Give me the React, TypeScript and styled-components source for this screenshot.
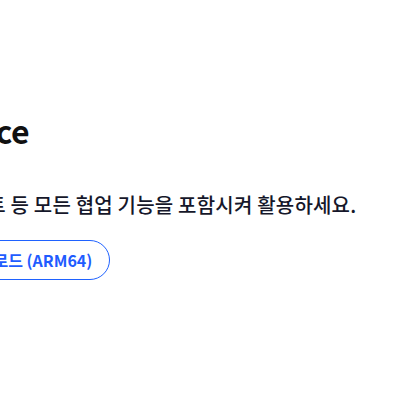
import React from "react";
import styled, { createGlobalStyle } from "styled-components";

const Global = createGlobalStyle`
  html, body { margin: 0; padding: 0; background: #ffffff; overflow: hidden; }
  body { font-family: "Noto Sans CJK KR", "Noto Sans", sans-serif; }
`;

const Page = styled.main`
  width: 400px;
  height: 400px;
  overflow: hidden;
  position: relative;
`;

const Column = styled.section`
  display: flex;
  flex-direction: column;
  align-items: flex-start;
  margin-left: -54px;
  padding-top: 108px;
  width: 560px;
`;

const Title = styled.h1`
  margin: 0;
  font-size: 32px;
  font-weight: 700;
  line-height: 44px;
  color: #111111;
  letter-spacing: -0.3px;
  white-space: nowrap;
`;

const Desc = styled.p`
  margin: 39px 0 0 4px;
  font-size: 20px;
  font-weight: 500;
  line-height: 28px;
  color: #15172a;
  letter-spacing: 0.2px;
  white-space: nowrap;
`;

const Button = styled.a`
  display: inline-flex;
  align-items: center;
  margin-top: 21px;
  height: 40px;
  box-sizing: border-box;
  padding: 0 17px;
  border: 1px solid #1f62ff;
  border-radius: 20px;
  color: #1f5cff;
  font-size: 16px;
  font-weight: 700;
  text-decoration: none;
  white-space: nowrap;
`;

export default function App() {
  return (
    <Page>
      <Global />
      <Column>
        <Title>Place</Title>
        <Desc>리포트 등 모든 협업 기능을 포함시켜 활용하세요.</Desc>
        <Button href="#">다운로드 (ARM64)</Button>
      </Column>
    </Page>
  );
}
